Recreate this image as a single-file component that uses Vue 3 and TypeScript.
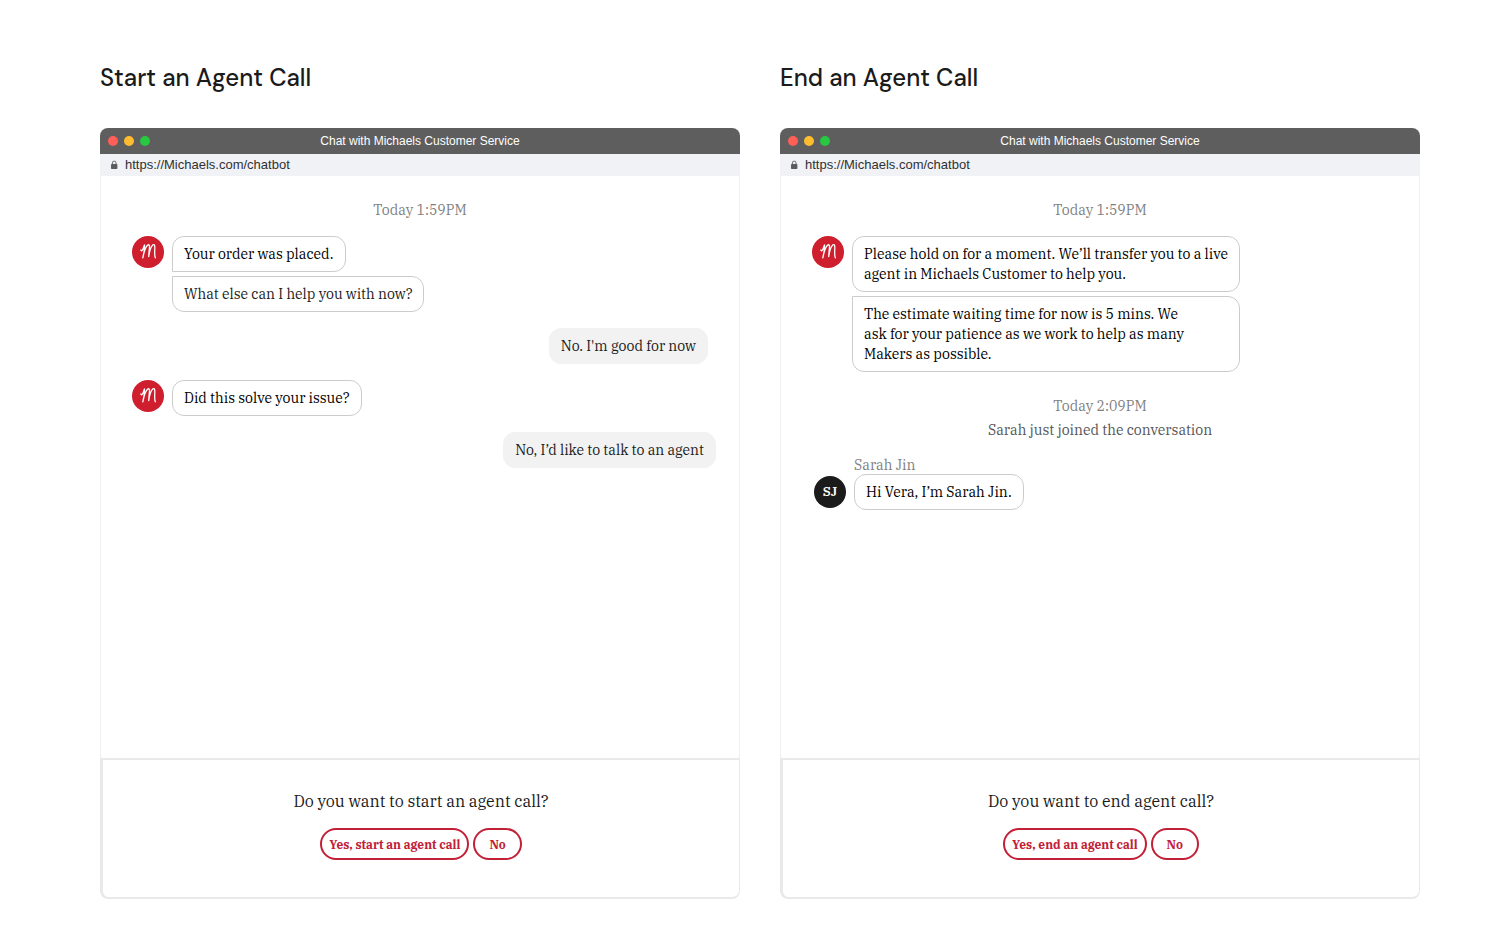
<script setup lang="ts">
interface Message {
  kind: 'bot' | 'agent' | 'user' | 'note'
  name?: string
  lines: string[]
  tone?: string
}

interface ChatWindow {
  id: string
  heading: string
  messages: Message[]
  question: string
  confirm: string
}

const windows: ChatWindow[] = [
  {
    id: 'start',
    heading: 'Start an Agent Call',
    messages: [
      { kind: 'note', lines: ['Today 1:59PM'] },
      { kind: 'bot', lines: ['Your order was placed.', 'What else can I help you with now?'] },
      { kind: 'user', lines: ["No. I'm good for now"] },
      { kind: 'bot', lines: ['Did this solve your issue?'] },
      { kind: 'user', lines: ['No, I’d like to talk to an agent'], tone: 'wide' },
    ],
    question: 'Do you want to start an agent call?',
    confirm: 'Yes, start an agent call',
  },
  {
    id: 'end',
    heading: 'End an Agent Call',
    messages: [
      { kind: 'note', lines: ['Today 1:59PM'] },
      {
        kind: 'bot',
        tone: 'long',
        lines: [
          'Please hold on for a moment. We’ll transfer you to a live\nagent in Michaels Customer to help you.',
          'The estimate waiting time for now is 5 mins. We\nask for your patience as we work to help as many\nMakers as possible.',
        ],
      },
      { kind: 'note', lines: ['Today 2:09PM', 'Sarah just joined the conversation'], tone: 'event' },
      { kind: 'agent', name: 'Sarah Jin', lines: ['Hi Vera, I’m Sarah Jin.'] },
    ],
    question: 'Do you want to end agent call?',
    confirm: 'Yes, end an agent call',
  },
]
</script>

<template>
  <main class="page">
    <section v-for="w in windows" :key="w.id" class="column">
      <h2 class="heading">{{ w.heading }}</h2>
      <div class="window">
        <header class="titlebar">
          <span class="lights">
            <i class="light red"></i>
            <i class="light yellow"></i>
            <i class="light green"></i>
          </span>
          <span class="title">Chat with Michaels Customer Service</span>
        </header>
        <div class="urlbar">
          <svg class="lock" viewBox="0 0 8 10" aria-hidden="true">
            <rect x="1" y="4" width="6.4" height="5" rx="0.8" fill="#5c5c60" />
            <path d="M2.4 4.2V2.9a1.8 1.8 0 0 1 3.6 0v1.3" fill="none" stroke="#5c5c60" stroke-width="0.9" />
          </svg>
          <span>https://Michaels.com/chatbot</span>
        </div>

        <div class="thread">
          <template v-for="(m, i) in w.messages" :key="i">
            <div v-if="m.kind === 'note'" class="note" :class="m.tone">
              <p v-for="line in m.lines" :key="line">{{ line }}</p>
            </div>
            <div v-else-if="m.kind === 'user'" class="user" :class="m.tone">
              <p class="bubble reply">{{ m.lines[0] }}</p>
            </div>
            <div v-else class="incoming" :class="[m.kind, m.tone]">
              <p v-if="m.name" class="name">{{ m.name }}</p>
              <span v-if="m.kind === 'agent'" class="avatar initials">SJ</span>
              <span v-else class="avatar">
                <svg viewBox="0 0 32 32" aria-hidden="true">
                  <path
                    d="M8.9 13.8C9 15.4 10.2 15.2 10.8 13.4L12.5 9C12.6 13 11.8 18 10.8 21.9C11.6 17.6 13.6 10.6 16 8.9C17.6 8.2 17.7 10 17.4 12.6C17.1 15.4 16.8 18 16.7 20.6C17.3 16.4 18.8 10.6 21 8.8C22.6 8 22.9 9.8 22.8 12.4C22.6 15.8 22.4 19.4 23.3 21.8"
                    fill="none"
                    stroke="#fff"
                    stroke-width="1.3"
                    stroke-linecap="round"
                    stroke-linejoin="round"
                  />
                </svg>
              </span>
              <div class="stack">
                <p v-for="line in m.lines" :key="line" class="bubble">{{ line }}</p>
              </div>
            </div>
          </template>
        </div>

        <footer class="prompt">
          <p class="question">{{ w.question }}</p>
          <div class="actions">
            <button type="button" class="pill">{{ w.confirm }}</button>
            <button type="button" class="pill no">No</button>
          </div>
        </footer>
      </div>
    </section>
  </main>
</template>

<style>
body {
  margin: 0;
  background: #fff;
}
</style>

<style scoped>
.page {
  box-sizing: border-box;
  min-height: 100vh;
  padding: 60px 92px 51px 100px;
  display: grid;
  grid-template-columns: 1fr 1fr;
  gap: 40px;
  font-family: "IBM Plex Serif", "DejaVu Serif Condensed", "DejaVu Serif", serif;
  font-size: 14px;
  line-height: 20px;
  color: #1b1b1b;
}

p {
  margin: 0;
}

.column {
  display: flex;
  flex-direction: column;
  gap: 32px;
  min-width: 0;
}

.heading {
  margin: 0;
  font-family: "DM Sans", Inter, sans-serif;
  font-size: 24px;
  line-height: 36px;
  font-weight: 500;
}

.window {
  flex: 1;
  display: flex;
  flex-direction: column;
}

.titlebar {
  display: grid;
  grid-template-columns: 1fr auto 1fr;
  align-items: center;
  height: 26px;
  padding: 0 8px;
  border-radius: 8px 8px 0 0;
  background: #5e5e5e;
  color: #fff;
  font-family: "Liberation Sans", Arial, sans-serif;
  font-size: 12px;
}

.lights {
  display: flex;
  gap: 6px;
}

.light {
  width: 10px;
  height: 10px;
  border-radius: 50%;
}

.red {
  background: #ff5f57;
}

.yellow {
  background: #febc2e;
}

.green {
  background: #28c840;
}

.urlbar {
  display: flex;
  align-items: center;
  gap: 7px;
  height: 22px;
  padding: 0 10px;
  background: #f1f2f5;
  color: #303033;
  font-family: "Liberation Sans", Arial, sans-serif;
  font-size: 13px;
}

.lock {
  width: 8px;
  height: 10px;
}

.thread {
  flex: 1;
  display: flex;
  flex-direction: column;
  gap: 16px;
  padding: 24px 31px;
  border: 1px solid #efefef;
  border-width: 0 1px;
}

.note {
  text-align: center;
  color: #7f7f7f;
}

.event {
  display: flex;
  flex-direction: column;
  gap: 4px;
  padding-top: 8px;
}

.event p:last-child {
  color: #555;
}

.incoming {
  display: grid;
  grid-template-columns: 32px auto;
  justify-content: start;
  column-gap: 8px;
}

.agent {
  align-items: center;
  padding-left: 2px;
}

.name {
  grid-column: 2;
  line-height: 18px;
  color: #7f7f7f;
}

.avatar {
  display: block;
  width: 32px;
  height: 32px;
  border-radius: 50%;
  background: #cf1f2e;
}

.avatar svg {
  display: block;
}

.initials {
  background: #1b1b1b;
  color: #fff;
  font-size: 13px;
  font-weight: 600;
  line-height: 32px;
  text-align: center;
}

.stack {
  display: flex;
  flex-direction: column;
  align-items: flex-start;
  gap: 4px;
}

.bubble {
  box-sizing: border-box;
  padding: 7px 11px;
  border: 1px solid #ccc;
  border-radius: 12px;
  white-space: pre-line;
}

.stack .bubble + .bubble {
  border-top-left-radius: 0;
}

.bot:not(.long) .bubble:not(:last-child) {
  border-bottom-left-radius: 0;
}

.long .stack {
  align-items: stretch;
}

.long .bubble,
.stack .bubble:first-child {
  color: #000;
}

.user {
  display: flex;
  justify-content: flex-end;
}

.user.wide {
  margin-right: -8px;
}

.reply {
  border-color: #f2f2f2;
  background: #f2f2f2;
}

.prompt {
  display: flex;
  flex-direction: column;
  align-items: center;
  gap: 16px;
  padding: 30px 16px 37px;
  border: 2px solid #e9e9e9;
  border-width: 2px 1px 2px 3px;
  border-radius: 0 0 8px 8px;
}

.question {
  font-size: 16px;
  line-height: 22px;
}

.actions {
  display: flex;
  gap: 4px;
}

.pill {
  box-sizing: border-box;
  height: 32px;
  padding: 0 7px;
  border: 2px solid #c22036;
  border-radius: 16px;
  background: #fff;
  color: #c22036;
  font-family: inherit;
  font-size: 12px;
  font-weight: 700;
}

.no {
  padding: 0 14px;
}
</style>
